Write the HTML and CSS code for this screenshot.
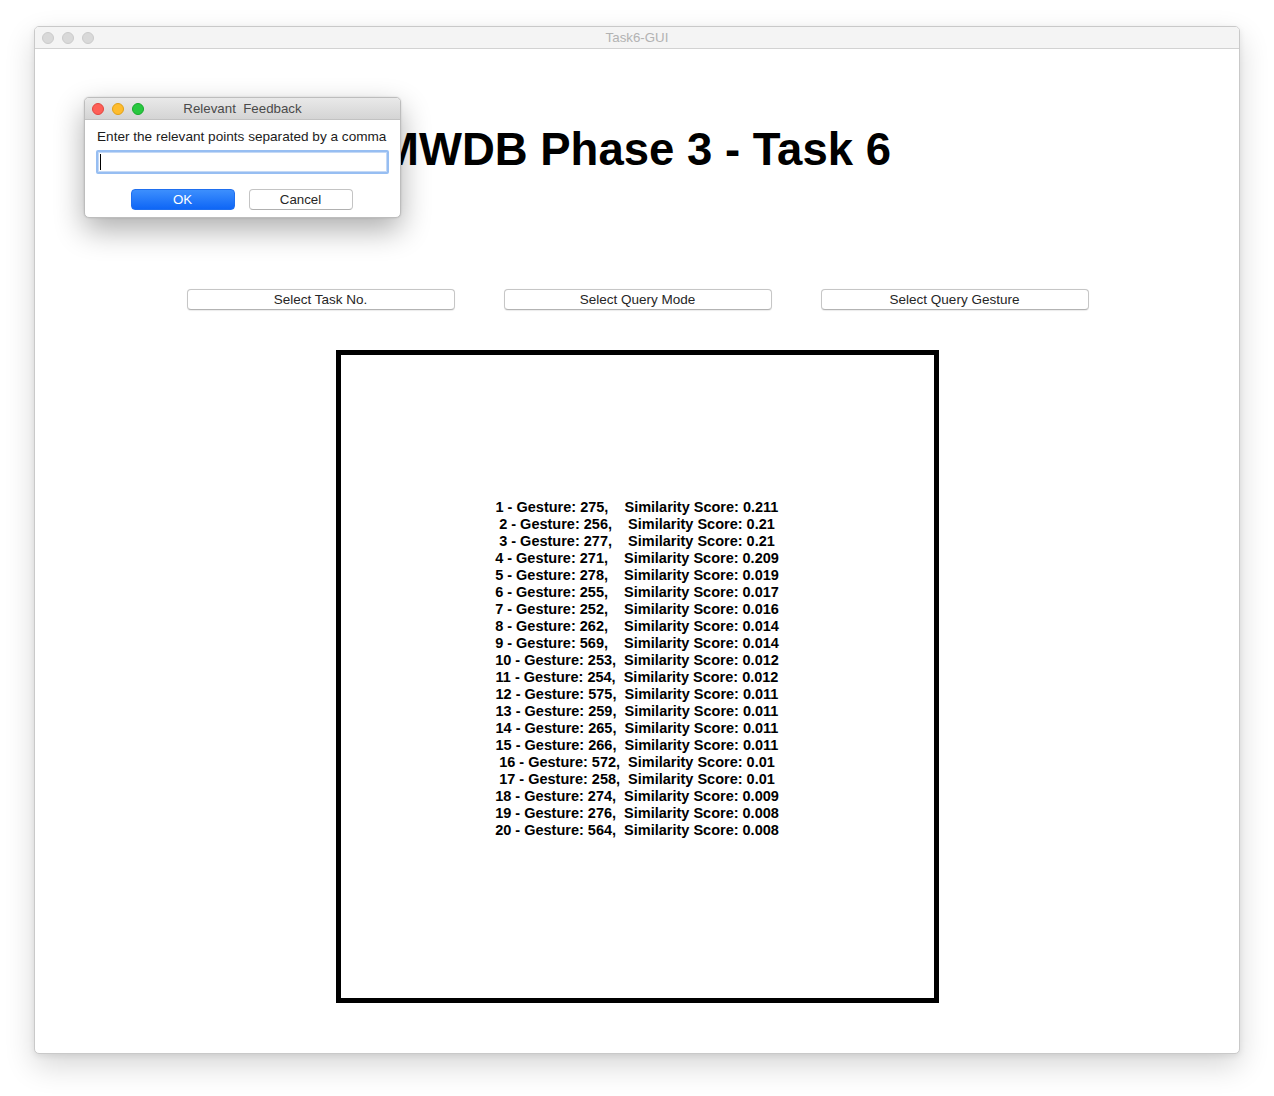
FILE: index.html
```html
<!DOCTYPE html>
<html>
<head>
<meta charset="utf-8">
<title>Task6-GUI</title>
<link rel="stylesheet" href="styles.css">
</head>
<body>
<div class="window">
  <div class="titlebar">
    <div class="lights">
      <span class="light gray"></span>
      <span class="light gray"></span>
      <span class="light gray"></span>
    </div>
    <div class="title">Task6-GUI</div>
  </div>
  <div class="content">
    <h1 class="heading">MWDB Phase 3 - Task 6</h1>
    <div class="btn-row">
      <button class="btn">Select Task No.</button>
      <button class="btn">Select Query Mode</button>
      <button class="btn">Select Query Gesture</button>
    </div>
    <div class="results">
      <div class="lines">
<div class="line">1 - Gesture: 275,    Similarity Score: 0.211</div>
<div class="line">2 - Gesture: 256,    Similarity Score: 0.21</div>
<div class="line">3 - Gesture: 277,    Similarity Score: 0.21</div>
<div class="line">4 - Gesture: 271,    Similarity Score: 0.209</div>
<div class="line">5 - Gesture: 278,    Similarity Score: 0.019</div>
<div class="line">6 - Gesture: 255,    Similarity Score: 0.017</div>
<div class="line">7 - Gesture: 252,    Similarity Score: 0.016</div>
<div class="line">8 - Gesture: 262,    Similarity Score: 0.014</div>
<div class="line">9 - Gesture: 569,    Similarity Score: 0.014</div>
<div class="line">10 - Gesture: 253,  Similarity Score: 0.012</div>
<div class="line">11 - Gesture: 254,  Similarity Score: 0.012</div>
<div class="line">12 - Gesture: 575,  Similarity Score: 0.011</div>
<div class="line">13 - Gesture: 259,  Similarity Score: 0.011</div>
<div class="line">14 - Gesture: 265,  Similarity Score: 0.011</div>
<div class="line">15 - Gesture: 266,  Similarity Score: 0.011</div>
<div class="line">16 - Gesture: 572,  Similarity Score: 0.01</div>
<div class="line">17 - Gesture: 258,  Similarity Score: 0.01</div>
<div class="line">18 - Gesture: 274,  Similarity Score: 0.009</div>
<div class="line">19 - Gesture: 276,  Similarity Score: 0.008</div>
<div class="line">20 - Gesture: 564,  Similarity Score: 0.008</div>
      </div>
    </div>
  </div>
</div>

<div class="dialog">
  <div class="dlg-titlebar">
    <div class="lights dlg-lights">
      <span class="light red"></span>
      <span class="light yellow"></span>
      <span class="light green"></span>
    </div>
    <div class="dlg-title">Relevant  Feedback</div>
  </div>
  <div class="dlg-body">
    <div class="dlg-label">Enter the relevant points separated by a comma</div>
    <div class="dlg-input"><span class="caret"></span></div>
    <div class="dlg-buttons">
      <button class="dbtn ok">OK</button>
      <button class="dbtn cancel">Cancel</button>
    </div>
  </div>
</div>
</body>
</html>
```

FILE: styles.css
```css
* { box-sizing: border-box; }

html, body {
  margin: 0;
  padding: 0;
  background: #ffffff;
  width: 1274px;
  height: 1096px;
  overflow: hidden;
  font-family: "Liberation Sans", Arial, sans-serif;
}

body {
  padding: 26px 0 0 34px;
}

.window {
  width: 1206px;
  height: 1028px;
  border: 1px solid #c9c9c9;
  border-radius: 5px;
  background: #ffffff;
  box-shadow: 0 12px 30px rgba(0, 0, 0, 0.16), 0 2px 6px rgba(0, 0, 0, 0.08);
  display: flex;
  flex-direction: column;
  overflow: hidden;
}

.titlebar {
  height: 22px;
  flex: 0 0 22px;
  background: #f4f4f4;
  border-bottom: 1px solid #d2d2d2;
  display: flex;
  align-items: center;
  position: relative;
}

.lights {
  display: flex;
  gap: 8px;
  padding-left: 7px;
}

.light {
  width: 12px;
  height: 12px;
  border-radius: 50%;
  display: block;
}

.light.gray { background: #d9d9d9; border: 1px solid #cbcbcb; }
.light.red { background: #fe5f57; border: 1px solid #e2463f; }
.light.yellow { background: #febc2e; border: 1px solid #e1a116; }
.light.green { background: #28c840; border: 1px solid #17a92c; }

.title {
  position: absolute;
  left: 0;
  right: 0;
  top: 0;
  text-align: center;
  font-size: 13.3px;
  line-height: 21px;
  color: #b2b2b2;
}

.content {
  flex: 1;
  display: flex;
  flex-direction: column;
  align-items: center;
}

.heading {
  margin: 78px 0 0 -2px;
  font-size: 45.5px;
  line-height: 46px;
  font-weight: bold;
  color: #000;
}

.btn-row {
  margin-top: 116px;
  display: flex;
  gap: 49px;
  padding-left: 1px;
}

.btn {
  width: 268px;
  height: 21px;
  padding: 0;
  border: 1px solid #c6c6c6;
  border-bottom-color: #b3b3b3;
  border-radius: 4px;
  background: #ffffff;
  font-family: "Liberation Sans", Arial, sans-serif;
  font-size: 13.5px;
  color: #262626;
  line-height: 19px;
  box-shadow: 0 0.5px 1px rgba(0, 0, 0, 0.08);
}

.results {
  margin-top: 40px;
  width: 603px;
  height: 653px;
  border: 5px solid #000;
  display: flex;
  align-items: center;
  justify-content: center;
}

.lines {
  padding-bottom: 15px;
  display: flex;
  flex-direction: column;
  align-items: center;
}

.line {
  white-space: pre;
  font-size: 14.5px;
  line-height: 17px;
  font-weight: bold;
  color: #000;
  text-align: center;
}

/* dialog */
.dialog {
  position: absolute;
  left: 84px;
  top: 97px;
  width: 317px;
  height: 121px;
  border-radius: 5px;
  background: #fff;
  border: 1px solid #bdbdbd;
  box-shadow: 0 12px 30px rgba(0, 0, 0, 0.32), 0 0 2px rgba(0, 0, 0, 0.15);
  overflow: hidden;
  display: flex;
  flex-direction: column;
}

.dlg-titlebar {
  height: 22px;
  flex: 0 0 22px;
  background: linear-gradient(#e9e9e9, #d4d4d4);
  border-bottom: 1px solid #c2c2c2;
  display: flex;
  align-items: center;
  position: relative;
}

.dlg-lights { padding-left: 7px; }

.dlg-title {
  position: absolute;
  left: 0;
  right: 0;
  top: 0;
  text-align: center;
  font-size: 13.3px;
  line-height: 21px;
  color: #4a4a4a;
  white-space: pre;
}

.dlg-body {
  padding: 9px 11px 0 11px;
  display: flex;
  flex-direction: column;
}

.dlg-label {
  font-size: 13.6px;
  line-height: 16px;
  color: #1c1c1c;
  padding-left: 1px;
  white-space: nowrap;
}

.dlg-input {
  margin-top: 5px;
  height: 24px;
  border: 2px solid #97bef2;
  border-radius: 2px;
  box-shadow: inset 0 0 0 1px #c4d9f6;
  display: flex;
  align-items: center;
  padding-left: 2px;
}

.caret {
  width: 1px;
  height: 16px;
  background: #000;
}

.dlg-buttons {
  margin-top: 15px;
  display: flex;
  justify-content: center;
  gap: 14px;
  padding-right: 2px;
}

.dbtn {
  width: 104px;
  height: 21px;
  padding: 0;
  border-radius: 4px;
  font-family: "Liberation Sans", Arial, sans-serif;
  font-size: 13.3px;
  line-height: 19px;
}

.dbtn.ok {
  background: linear-gradient(#3d8ffd, #0e66f6);
  border: 1px solid #1f6fef;
  color: #fff;
}

.dbtn.cancel {
  background: #fff;
  border: 1px solid #c4c4c4;
  border-bottom-color: #b0b0b0;
  color: #262626;
}
```
